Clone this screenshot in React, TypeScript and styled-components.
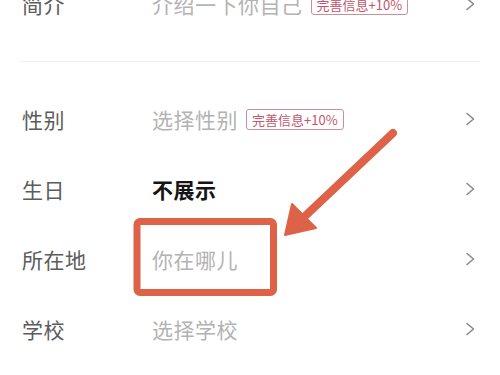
import React from 'react';
import styled, { createGlobalStyle } from 'styled-components';

const GlobalStyle = createGlobalStyle`
  html, body {
    margin: 0;
    padding: 0;
    background: #ffffff;
  }
  body {
    font-family: 'Noto Sans CJK SC', 'Noto Sans', sans-serif;
  }
`;

const Page = styled.div`
  position: relative;
  width: 500px;
  height: 375px;
  overflow: hidden;
  background: #ffffff;
`;

const List = styled.div`
  display: flex;
  flex-direction: column;
  margin-top: -31px;
`;

const Row = styled.div`
  display: flex;
  align-items: center;
  height: 70px;
  padding: 0 25px 0 22px;
`;

const Label = styled.div`
  width: 130px;
  font-size: 21px;
  color: #5c5c5c;
  letter-spacing: 0.5px;
`;

const Value = styled.div<{ $strong?: boolean }>`
  flex: 1;
  display: flex;
  align-items: center;
  gap: 8px;
  font-size: 21px;
  letter-spacing: 0.5px;
  color: ${p => (p.$strong ? '#151515' : '#b3b3b3')};
  font-weight: ${p => (p.$strong ? 700 : 400)};
`;

const Badge = styled.span`
  display: inline-flex;
  align-items: center;
  height: 19px;
  padding: 0 5px;
  border: 1px solid #c9909c;
  border-radius: 3px;
  font-size: 13px;
  letter-spacing: 0;
  color: #c4556c;
  font-weight: 400;
`;

const Chevron = styled.svg`
  width: 10px;
  height: 14px;
  flex-shrink: 0;
`;

const DividerWrap = styled.div`
  padding: 22px 20px;
`;

const Divider = styled.div`
  height: 1px;
  background: #f0f0f0;
`;

const Overlay = styled.svg`
  position: absolute;
  left: 0;
  top: 0;
  width: 500px;
  height: 375px;
  pointer-events: none;
`;

const Arrow = () => (
  <Chevron viewBox="0 0 10 14">
    <path d="M2 1.5 L8.5 7 L2 12.5" fill="none" stroke="#8a8a8a" strokeWidth="1.6" strokeLinecap="round" strokeLinejoin="round" />
  </Chevron>
);

const rows: { label: string; value: string; badge?: boolean; strong?: boolean }[] = [
  { label: '性别', value: '选择性别', badge: true },
  { label: '生日', value: '不展示', strong: true },
  { label: '所在地', value: '你在哪儿' },
  { label: '学校', value: '选择学校' },
];

export default function App() {
  return (
    <Page>
      <GlobalStyle />
      <List>
        <Row>
          <Label>简介</Label>
          <Value>
            介绍一下你自己
            <Badge>完善信息+10%</Badge>
          </Value>
          <Arrow />
        </Row>
        <DividerWrap>
          <Divider />
        </DividerWrap>
        {rows.map(r => (
          <Row key={r.label}>
            <Label>{r.label}</Label>
            <Value $strong={r.strong}>
              {r.value}
              {r.badge && <Badge>完善信息+10%</Badge>}
            </Value>
            <Arrow />
          </Row>
        ))}
      </List>

      {/* red annotation over the screenshot */}
      <Overlay viewBox="0 0 500 375">
        <rect x="137" y="221.5" width="136.5" height="71" rx="3" fill="none" stroke="#dd6248" strokeWidth="7" />
        <line x1="393" y1="133" x2="302" y2="219" stroke="#dd6248" strokeWidth="8" strokeLinecap="round" />
        <polygon points="285,235 292,204 316,228" fill="#dd6248" stroke="#dd6248" strokeWidth="2" strokeLinejoin="round" />
      </Overlay>
    </Page>
  );
}
